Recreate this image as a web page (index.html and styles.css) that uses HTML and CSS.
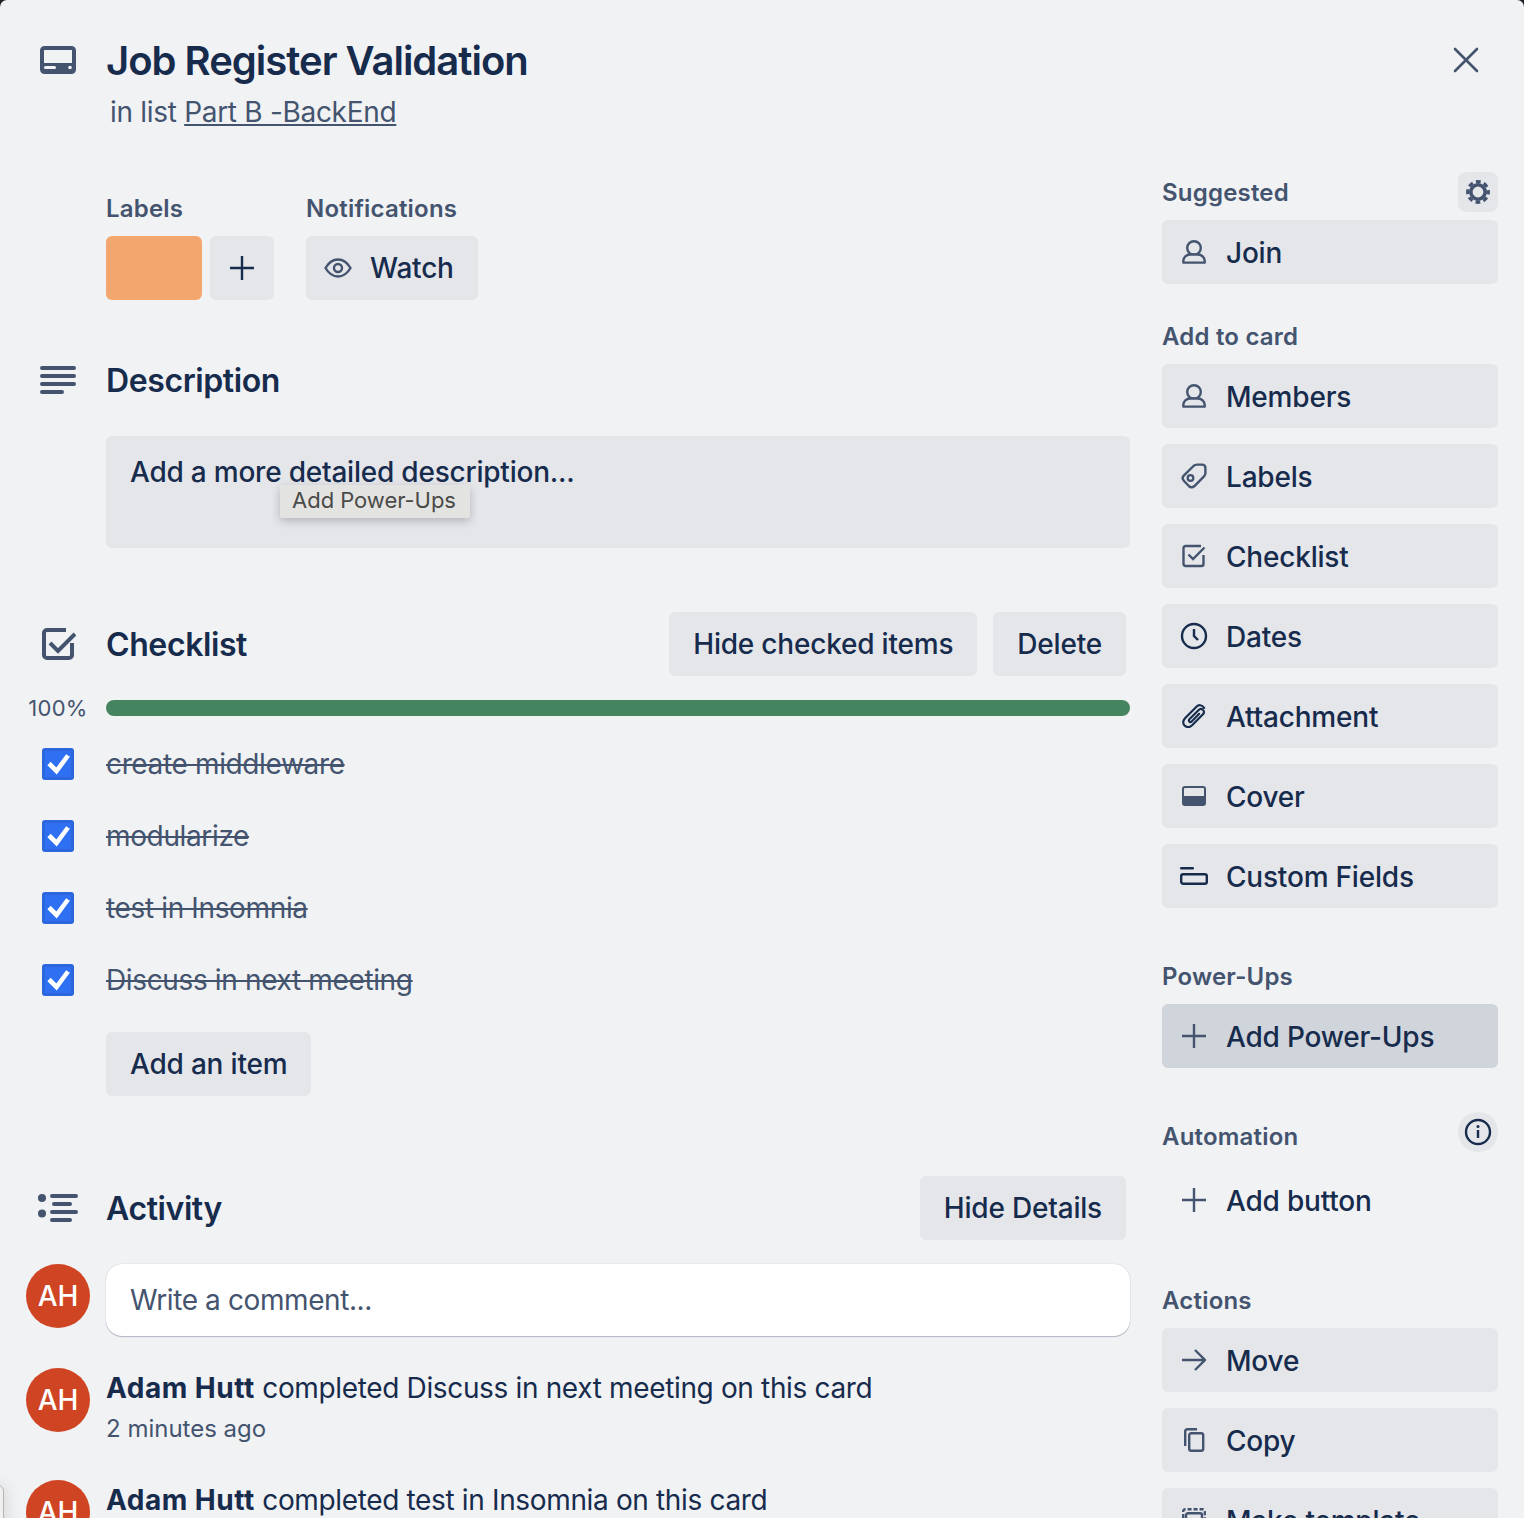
FILE: index.html
```html
<!DOCTYPE html>
<html lang="en">
<head>
  <meta charset="UTF-8">
  <meta name="viewport" content="width=device-width, initial-scale=1.0">
  <title>Job Register Validation</title>
  <link rel="stylesheet" href="styles.css">
</head>
<body>

  <div class="card-window">

    <header class="card-header">
      <div class="gutter">
        <svg class="icon-lg" viewBox="0 0 36 28"><rect x="2" y="2" width="32" height="24" rx="2.5" fill="none" stroke="#44546f" stroke-width="4"/><rect x="2" y="17" width="32" height="9" fill="#44546f"/><rect x="4" y="20" width="12" height="3" rx="1.5" fill="#f1f2f4"/><circle cx="30" cy="21.5" r="1.8" fill="#f1f2f4"/></svg>
      </div>
      <div class="header-text">
        <h1>Job Register Validation</h1>
        <p class="in-list">in list <a href="#">Part B -BackEnd</a></p>
      </div>
      <button class="close-btn" aria-label="Close">
        <svg viewBox="0 0 28 28" width="28" height="28"><path d="M3 3 L25 25 M25 3 L3 25" stroke="#44546f" stroke-width="2.6" stroke-linecap="round"/></svg>
      </button>
    </header>

    <div class="columns">
      <main class="main-col">

        <div class="meta-row">
          <div class="meta-group">
            <h3 class="small-title">Labels</h3>
            <div class="meta-items">
              <span class="label-chip"></span>
              <button class="btn btn-square"><svg viewBox="0 0 24 24" width="24" height="24"><path d="M12 0 V24 M0 12 H24" stroke="#172b4d" stroke-width="2.4"/></svg></button>
            </div>
          </div>
          <div class="meta-group">
            <h3 class="small-title">Notifications</h3>
            <button class="btn btn-watch">
              <svg viewBox="0 0 28 20" width="28" height="20"><path d="M1.5 10 C5 4 9 1.5 14 1.5 S23 4 26.5 10 C23 16 19 18.5 14 18.5 S5 16 1.5 10 Z" fill="none" stroke="#44546f" stroke-width="2.4"/><circle cx="14" cy="10" r="4" fill="none" stroke="#44546f" stroke-width="2.4"/></svg>
              Watch
            </button>
          </div>
        </div>

        <section class="section section-description">
          <div class="section-head">
            <div class="gutter">
              <svg class="icon-lg" viewBox="0 0 36 28"><g fill="#44546f"><rect y="0" width="36" height="4" rx="2"/><rect y="8" width="36" height="4" rx="2"/><rect y="16" width="36" height="4" rx="2"/><rect y="24" width="24" height="4" rx="2"/></g></svg>
            </div>
            <h2>Description</h2>
          </div>
          <div class="description-box">Add a more detailed description...</div>
          <div class="tooltip">Add Power-Ups</div>
        </section>

        <section class="section section-checklist">
          <div class="section-head">
            <div class="gutter">
              <svg class="icon-check" viewBox="0 0 34 32"><path d="M30 15 V27 A3 3 0 0 1 27 30 H5 A3 3 0 0 1 2 27 V5 A3 3 0 0 1 5 2 H24" fill="none" stroke="#44546f" stroke-width="4"/><path d="M8 15 L16 23 L33 6" fill="none" stroke="#44546f" stroke-width="4"/></svg>
            </div>
            <h2>Checklist</h2>
            <div class="head-actions">
              <button class="btn">Hide checked items</button>
              <button class="btn">Delete</button>
            </div>
          </div>

          <div class="progress-row">
            <div class="gutter"><span class="percent">100%</span></div>
            <div class="progress-bar"></div>
          </div>

          <div class="check-item">
            <div class="gutter"><span class="checkbox"><svg viewBox="0 0 32 32" width="32" height="32"><path d="M7 15.5 L14.5 23 L26 7.5" fill="none" stroke="#fff" stroke-width="4.6"/></svg></span></div>
            <span class="check-text">create middleware</span>
          </div>
          <div class="check-item">
            <div class="gutter"><span class="checkbox"><svg viewBox="0 0 32 32" width="32" height="32"><path d="M7 15.5 L14.5 23 L26 7.5" fill="none" stroke="#fff" stroke-width="4.6"/></svg></span></div>
            <span class="check-text">modularize</span>
          </div>
          <div class="check-item">
            <div class="gutter"><span class="checkbox"><svg viewBox="0 0 32 32" width="32" height="32"><path d="M7 15.5 L14.5 23 L26 7.5" fill="none" stroke="#fff" stroke-width="4.6"/></svg></span></div>
            <span class="check-text">test in Insomnia</span>
          </div>
          <div class="check-item">
            <div class="gutter"><span class="checkbox"><svg viewBox="0 0 32 32" width="32" height="32"><path d="M7 15.5 L14.5 23 L26 7.5" fill="none" stroke="#fff" stroke-width="4.6"/></svg></span></div>
            <span class="check-text">Discuss in next meeting</span>
          </div>

          <button class="btn btn-add-item">Add an item</button>
        </section>

        <section class="section section-activity">
          <div class="section-head">
            <div class="gutter">
              <svg class="icon-activity" viewBox="0 0 40 28"><g fill="#44546f"><circle cx="4" cy="4" r="4"/><circle cx="4" cy="19.5" r="4"/><rect x="12" y="0" width="28" height="4" rx="2"/><rect x="14" y="8" width="20" height="4" rx="2"/><rect x="12" y="16" width="28" height="4" rx="2"/><rect x="12" y="24" width="22" height="4" rx="2"/></g></svg>
            </div>
            <h2>Activity</h2>
            <div class="head-actions">
              <button class="btn">Hide Details</button>
            </div>
          </div>

          <div class="comment-row">
            <div class="gutter"><span class="avatar">AH</span></div>
            <div class="comment-input">Write a comment...</div>
          </div>

          <div class="activity-item">
            <div class="gutter"><span class="avatar">AH</span></div>
            <div>
              <p class="activity-text"><strong>Adam Hutt</strong> completed Discuss in next meeting on this card</p>
              <p class="activity-time">2 minutes ago</p>
            </div>
          </div>
          <div class="activity-item">
            <div class="gutter"><span class="avatar">AH</span></div>
            <div>
              <p class="activity-text"><strong>Adam Hutt</strong> completed test in Insomnia on this card</p>
            </div>
          </div>
        </section>
      </main>

      <aside class="side-col">
        <div class="side-title side-title-suggested">
          <h3 class="small-title">Suggested</h3>
          <button class="mini-btn" aria-label="Settings">
            <svg viewBox="0 0 24 24" width="24" height="24"><circle cx="12" cy="12" r="7.2" fill="none" stroke="#44546f" stroke-width="3.6"/><circle cx="12" cy="12" r="10.3" fill="none" stroke="#44546f" stroke-width="3.2" stroke-dasharray="4.8 3.29" stroke-dashoffset="2.4"/></svg>
          </button>
        </div>
        <button class="side-btn">
          <svg class="side-icon" viewBox="0 0 24 24"><circle cx="12" cy="8" r="6.8" fill="none" stroke="#44546f" stroke-width="2.4"/><path d="M1.3 22.6 V21 C1.3 17.5 4.5 14.5 8 14.5 H16 C19.5 14.5 22.7 17.5 22.7 21 V22.6 Z" fill="#e4e6ea" stroke="#44546f" stroke-width="2.4" stroke-linejoin="round"/></svg>
          Join
        </button>

        <h3 class="small-title side-heading side-heading-add">Add to card</h3>
        <div class="side-list">
          <button class="side-btn">
            <svg class="side-icon" viewBox="0 0 24 24"><circle cx="12" cy="8" r="6.8" fill="none" stroke="#44546f" stroke-width="2.4"/><path d="M1.3 22.6 V21 C1.3 17.5 4.5 14.5 8 14.5 H16 C19.5 14.5 22.7 17.5 22.7 21 V22.6 Z" fill="#e4e6ea" stroke="#44546f" stroke-width="2.4" stroke-linejoin="round"/></svg>
            Members
          </button>
          <button class="side-btn">
            <svg class="side-icon side-icon-tag" viewBox="0 0 26 26"><path d="M3 12.3 L12.5 3 Q14 1.6 16 1.6 L21 1.6 Q24.4 1.6 24.4 5 L24.4 10 Q24.4 12 23 13.4 L13.5 23 Q10.5 25.5 7.8 23 L3 18 Q0.2 15 3 12.3 Z" fill="none" stroke="#44546f" stroke-width="2.4"/><circle cx="9.5" cy="15" r="2.8" fill="none" stroke="#44546f" stroke-width="2.3"/></svg>
            Labels
          </button>
          <button class="side-btn">
            <svg class="side-icon" viewBox="0 0 24 24"><path d="M21.5 11 V20 A2 2 0 0 1 19.5 22 H3.5 A2 2 0 0 1 1.5 20 V4 A2 2 0 0 1 3.5 2 H19" fill="none" stroke="#44546f" stroke-width="2.4"/><path d="M6.5 10.5 L11 15 L22.5 3.5" fill="none" stroke="#44546f" stroke-width="2.4"/></svg>
            Checklist
          </button>
          <button class="side-btn">
            <svg class="side-icon side-icon-lg" viewBox="0 0 28 28"><circle cx="14" cy="14" r="12" fill="none" stroke="#172b4d" stroke-width="2.4"/><path d="M14 7 V14 L18 18" fill="none" stroke="#172b4d" stroke-width="2.4"/></svg>
            Dates
          </button>
          <button class="side-btn">
            <svg class="side-icon" viewBox="1 1 21.5 22"><path d="M21 4.5 C19 1.5 16 1.5 14 3.5 L3.5 14 C1.2 16.5 1.5 19.5 3.5 21 C5.5 22.7 8 22.3 10 20.5 L20 10.5 C21.3 9 21 7.3 19.8 6.3 C18.5 5.2 17 5.5 15.8 6.7 L7.5 15 C6.8 15.8 7 16.8 7.6 17.3 C8.3 17.8 9 17.6 9.8 16.8 L16.5 10" fill="none" stroke="#172b4d" stroke-width="2" stroke-linecap="round"/></svg>
            Attachment
          </button>
          <button class="side-btn">
            <svg class="side-icon side-icon-cover" viewBox="0 0 24 20"><rect x="1" y="1" width="22" height="18" rx="2" fill="none" stroke="#44546f" stroke-width="2"/><rect x="1" y="10" width="22" height="9" fill="#44546f"/></svg>
            Cover
          </button>
          <button class="side-btn">
            <svg class="side-icon side-icon-lg side-icon-fields" viewBox="0 0 28 18"><rect x="1.2" y="7.2" width="25.6" height="9.6" rx="2" fill="none" stroke="#172b4d" stroke-width="2.4"/><rect x="0" y="0" width="14" height="2.4" rx="1.2" fill="#172b4d"/></svg>
            Custom Fields
          </button>
        </div>

        <h3 class="small-title side-heading side-heading-power">Power-Ups</h3>
        <button class="side-btn side-btn-active">
          <svg class="side-icon" viewBox="0 0 24 24"><path d="M12 0 V24 M0 12 H24" stroke="#44546f" stroke-width="2.4"/></svg>
          Add Power-Ups
        </button>

        <div class="side-title side-title-auto">
          <h3 class="small-title">Automation</h3>
          <button class="mini-btn mini-btn-round" aria-label="Info">
            <svg viewBox="0 0 28 28" width="28" height="28"><circle cx="14" cy="14" r="12" fill="none" stroke="#172b4d" stroke-width="2.4"/><rect x="12.8" y="12" width="2.4" height="8" fill="#172b4d"/><circle cx="14" cy="8.5" r="1.5" fill="#172b4d"/></svg>
          </button>
        </div>
        <button class="side-btn side-btn-plain">
          <svg class="side-icon" viewBox="0 0 24 24"><path d="M12 0 V24 M0 12 H24" stroke="#44546f" stroke-width="2.4"/></svg>
          Add button
        </button>

        <h3 class="small-title side-heading side-heading-actions">Actions</h3>
        <div class="side-list">
          <button class="side-btn">
            <svg class="side-icon" viewBox="0 0 24 24"><path d="M0 12 H22 M13 2 L23 12 L13 22" fill="none" stroke="#44546f" stroke-width="2.4"/></svg>
            Move
          </button>
          <button class="side-btn">
            <svg class="side-icon" viewBox="0 0 24 24"><rect x="7.2" y="5.2" width="14" height="17.6" rx="2" fill="none" stroke="#44546f" stroke-width="2.4"/><path d="M3.2 18 V3.2 A2 2 0 0 1 5.2 1.2 H15" fill="none" stroke="#44546f" stroke-width="2.4"/></svg>
            Copy
          </button>
          <button class="side-btn">
            <svg class="side-icon" viewBox="0 0 24 24"><rect x="4" y="5.2" width="16" height="17" rx="2" fill="none" stroke="#44546f" stroke-width="2.4"/><path d="M1.2 10 V3.2 A2 2 0 0 1 3.2 1.2 H20.8 A2 2 0 0 1 22.8 3.2 V10" fill="none" stroke="#44546f" stroke-width="2.4" stroke-dasharray="4 2"/></svg>
            Make template
          </button>
        </div>
      </aside>
    </div>

    <!-- edge of another window showing at the bottom left -->
    <div class="peek-window"></div>
  </div>

</body>
</html>
```

FILE: styles.css
```css
:root {
  --bg-color: #f1f2f4;
  --btn-color: #e4e6ea;
  --btn-active: #d0d4db;
  --text-color: #172b4d;
  --text-subtle: #44546f;
  --radius: 6px;
}

* {
  box-sizing: border-box;
}

html,
body {
  margin: 0;
  padding: 0;
  height: 100%;
  overflow: hidden;
  background-color: #1d2125;
}

body {
  font-family: Inter, "Noto Sans", sans-serif;
  color: var(--text-color);
}

h1, h2, h3, p {
  margin: 0;
}

button {
  font-family: inherit;
  border: none;
  cursor: pointer;
  color: inherit;
}

.card-window {
  position: relative;
  height: 1518px;
  overflow: hidden;
  background-color: var(--bg-color);
  border-radius: 7px 7px 0 0;
}

.peek-window {
  position: absolute;
  left: -12px;
  top: 1485px;
  width: 16px;
  height: 60px;
  background-color: #f0f0f0;
  border: 1px solid #b4b4b4;
  border-radius: 6px;
  box-shadow: 0 0 18px rgba(0, 0, 0, 0.14);
}

.gutter {
  width: 64px;
  flex: none;
  margin-right: 16px;
  display: flex;
  justify-content: center;
  align-items: center;
}

.icon-lg {
  width: 36px;
  height: 28px;
  display: block;
}

.icon-check {
  width: 34px;
  height: 32px;
  margin-left: 2px;
  display: block;
}

.icon-activity {
  width: 40px;
  height: 28px;
  display: block;
}

/* header */
.card-header {
  display: flex;
  align-items: flex-start;
  padding: 32px 26px 0 26px;
  height: 172px;
}

.card-header .gutter {
  height: 56px;
}

.header-text {
  flex: 1;
}

h1 {
  font-size: 40px;
  line-height: 56px;
  font-weight: 600;
  letter-spacing: -1px;
  padding-top: 1px;
}

.in-list {
  font-size: 28px;
  line-height: 40px;
  color: var(--text-subtle);
  margin: 3px 0 0 4px;
  letter-spacing: -0.3px;
}

.in-list a {
  color: var(--text-subtle);
}

.close-btn {
  width: 28px;
  height: 28px;
  padding: 0;
  margin: 14px 18px 0 0;
  background: none;
}

/* columns */
.columns {
  display: flex;
  padding: 0 26px;
}

.main-col {
  width: 1104px;
  flex: none;
  position: relative;
}

.side-col {
  width: 336px;
  flex: none;
  margin-left: 32px;
}

.small-title {
  font-size: 24px;
  line-height: 32px;
  font-weight: 600;
  color: var(--text-subtle);
  letter-spacing: 0.2px;
  padding-top: 1px;
}

.btn {
  height: 64px;
  padding: 0 24px;
  font-size: 28px;
  font-weight: 500;
  letter-spacing: -0.2px;
  background-color: var(--btn-color);
  border-radius: var(--radius);
}

/* labels row */
.meta-row {
  display: flex;
  gap: 32px;
  padding: 20px 0 0 80px;
}

.meta-group .small-title {
  height: 32px;
  margin-bottom: 12px;
}

.meta-items {
  display: flex;
  gap: 8px;
}

.label-chip {
  width: 96px;
  height: 64px;
  background-color: #f3a76f;
  border-radius: var(--radius);
}

.btn-square {
  width: 64px;
  padding: 0;
  display: flex;
  align-items: center;
  justify-content: center;
}

.btn-watch {
  display: flex;
  align-items: center;
  gap: 18px;
  padding: 0 24px 0 18px;
}

/* sections */
.section-head {
  display: flex;
  align-items: center;
  height: 64px;
}

h2 {
  font-size: 32px;
  font-weight: 600;
  line-height: 40px;
  letter-spacing: -0.4px;
  padding-top: 2px;
}

.head-actions {
  margin-left: auto;
  margin-right: 4px;
  display: flex;
  gap: 16px;
}

.section-description {
  margin-top: 48px;
  position: relative;
}

.description-box {
  margin: 24px 0 0 80px;
  height: 112px;
  padding: 16px 24px;
  font-size: 28px;
  line-height: 40px;
  font-weight: 500;
  letter-spacing: -0.22px;
  background-color: var(--btn-color);
  border-radius: var(--radius);
}

.tooltip {
  position: absolute;
  left: 254px;
  top: 137px;
  width: 190px;
  height: 33px;
  padding-right: 2px;
  font-size: 22px;
  line-height: 30px;
  letter-spacing: -0.05px;
  text-align: center;
  color: #4a4a48;
  background-color: #e3e3e1;
  border-radius: 2px;
  box-shadow: 0 3px 10px rgba(0, 0, 0, 0.22);
}

.section-checklist {
  margin-top: 64px;
}

.progress-row {
  display: flex;
  align-items: center;
  height: 16px;
  margin-top: 24px;
}

.percent {
  font-size: 22px;
  letter-spacing: 0.3px;
  color: var(--text-subtle);
  white-space: nowrap;
}

.progress-bar {
  flex: 1;
  height: 16px;
  border-radius: 8px;
  background-color: #44845e;
}

.check-item {
  display: flex;
  align-items: center;
  height: 72px;
}

.progress-row + .check-item {
  margin-top: 12px;
}

.checkbox {
  width: 32px;
  height: 32px;
  background-color: #2f70f3;
  border: 3px solid #2c66dc;
  border-radius: 3px;
  display: flex;
  align-items: center;
  justify-content: center;
}

.checkbox svg {
  flex: none;
}

.check-text {
  font-size: 28px;
  letter-spacing: -0.36px;
  color: var(--text-subtle);
  text-decoration: line-through;
}

.btn-add-item {
  display: block;
  margin: 16px 0 0 80px;
}

.section-activity {
  margin-top: 80px;
}

.comment-row {
  display: flex;
  align-items: flex-start;
  margin-top: 24px;
}

.avatar {
  width: 64px;
  height: 64px;
  border-radius: 50%;
  background-color: #cf4523;
  color: #fff;
  font-size: 28px;
  font-weight: 500;
  display: flex;
  align-items: center;
  justify-content: center;
}

.comment-input {
  flex: 1;
  height: 72px;
  padding: 0 24px;
  font-size: 28px;
  line-height: 72px;
  letter-spacing: -0.4px;
  color: var(--text-subtle);
  background-color: #fff;
  border-radius: 16px;
  box-shadow: 0 1px 1px rgba(9, 30, 66, 0.25), 0 0 1px rgba(9, 30, 66, 0.31);
}

.activity-item {
  display: flex;
  align-items: flex-start;
  margin-top: 32px;
  height: 80px;
}

.activity-item .gutter {
  align-items: flex-start;
}

.activity-text {
  font-size: 28px;
  line-height: 40px;
  letter-spacing: -0.35px;
}

.activity-text strong {
  font-weight: 700;
  letter-spacing: 0.5px;
}

.activity-time {
  font-size: 24px;
  line-height: 40px;
  padding-top: 1px;
  color: var(--text-subtle);
}

/* sidebar */
.side-title {
  display: flex;
  justify-content: space-between;
  align-items: center;
}

.side-title-suggested {
  height: 40px;
  margin-bottom: 8px;
}

.side-title-suggested .small-title {
  padding-top: 2px;
}

.side-title-auto {
  height: 40px;
  margin-top: 44px;
  align-items: flex-end;
  margin-bottom: 16px;
}

.side-title-auto .small-title {
  margin-bottom: -1px;
}

.mini-btn {
  width: 40px;
  height: 40px;
  padding: 0;
  background-color: var(--btn-color);
  border-radius: 8px;
  display: flex;
  align-items: center;
  justify-content: center;
}

.mini-btn-round {
  border-radius: 50%;
}

.side-list {
  display: flex;
  flex-direction: column;
  gap: 16px;
}

.side-btn {
  width: 100%;
  height: 64px;
  padding: 1px 0 0 20px;
  display: flex;
  align-items: center;
  gap: 20px;
  font-size: 28px;
  font-weight: 500;
  letter-spacing: -0.2px;
  background-color: var(--btn-color);
  border-radius: var(--radius);
  text-align: left;
}

.side-btn-active {
  background-color: var(--btn-active);
}

.side-btn-plain {
  background: none;
}

.side-icon {
  width: 24px;
  height: 24px;
  flex: none;
  margin-top: -1px;
}

.side-icon-lg {
  width: 28px;
  height: 28px;
  margin: -1px -2px 0;
}

.side-icon-tag {
  width: 26px;
  height: 26px;
  margin: -1px -1px 0;
}

.side-icon-cover {
  height: 20px;
}

.side-icon-fields {
  height: 18px;
}

.side-heading {
  margin-bottom: 11px;
}

.side-heading-add {
  margin-top: 36px;
}

.side-heading-power {
  margin-top: 52px;
}

.side-heading-actions {
  margin-top: 52px;
}
```
